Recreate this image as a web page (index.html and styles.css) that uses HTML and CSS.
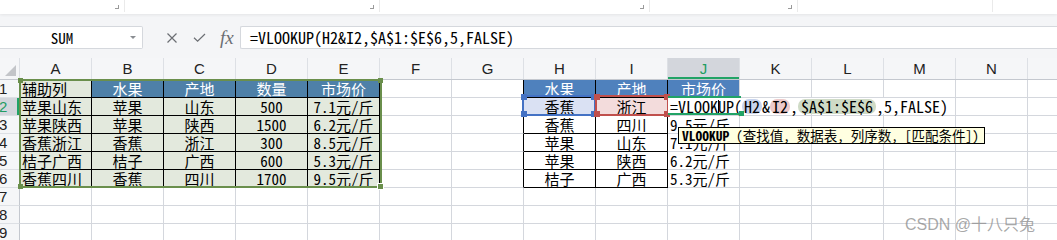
FILE: index.html
```html
<!DOCTYPE html>
<html lang="zh-CN">
<head>
<meta charset="utf-8">
<title>VLOOKUP</title>
<link rel="stylesheet" href="styles.css">
</head>
<body>
<div class="ribbon">
  <div class="grp g1"><span class="launch"></span></div>
  <div class="grp g2"><span class="launch"></span></div>
  <div class="grp g3"><span class="launch"></span></div>
  <div class="grp g4"><span class="launch"></span></div>
  <div class="grp g5"></div>
</div>
<div class="fbar">
  <div class="namebox"><span class="nm">SUM</span><span class="dd"><span class="caret"></span></span></div>
  <div class="fbtns">
    <svg class="ico" width="12" height="12" viewBox="0 0 12 12"><path d="M1.5 1.5L10.5 10.5M10.5 1.5L1.5 10.5" stroke="#6b6e73" stroke-width="1.2" fill="none"/></svg>
    <svg class="ico" width="13" height="10" viewBox="0 0 13 10"><path d="M1 4.8L4.6 8.2L12 1" stroke="#6b6e73" stroke-width="1.2" fill="none"/></svg>
    <span class="fx">fx</span>
  </div>
  <div class="finput">=VLOOKUP(H2&amp;I2,$A$1:$E$6,5,FALSE)</div>
</div>
<div class="sheet">
  <div class="row hdr">
    <div class="corner"><span class="tri"></span></div>
    <div class="ch">A</div><div class="ch">B</div><div class="ch">C</div><div class="ch">D</div><div class="ch">E</div><div class="ch">F</div><div class="ch">G</div><div class="ch">H</div><div class="ch">I</div><div class="ch sel">J</div><div class="ch">K</div><div class="ch">L</div><div class="ch">M</div><div class="ch">N</div><div class="ch"></div>
  </div>
  <div class="row">
    <div class="rh">1</div>
    <div class="c g k l">辅助列</div><div class="c hb k">水果</div><div class="c hb k">产地</div><div class="c hb k">数量</div><div class="c hb k">市场价</div>
    <div class="c"></div><div class="c kl"></div>
    <div class="c hr k">水果</div><div class="c hr k">产地</div><div class="c hr">市场价</div>
    <div class="c"></div><div class="c"></div><div class="c"></div><div class="c"></div><div class="c"></div>
  </div>
  <div class="row">
    <div class="rh sel">2</div>
    <div class="c g k l">苹果山东</div><div class="c g k">苹果</div><div class="c g k">山东</div><div class="c g k">500</div><div class="c g k">7.1元/斤</div>
    <div class="c"></div><div class="c kl"></div>
    <div class="c k bluebg">香蕉</div><div class="c k pinkbg">浙江</div><div class="c"></div>
    <div class="c"></div><div class="c"></div><div class="c"></div><div class="c"></div><div class="c"></div>
  </div>
  <div class="row">
    <div class="rh">3</div>
    <div class="c g k l">苹果陕西</div><div class="c g k">苹果</div><div class="c g k">陕西</div><div class="c g k">1500</div><div class="c g k">6.2元/斤</div>
    <div class="c"></div><div class="c kl"></div>
    <div class="c k">香蕉</div><div class="c k">四川</div><div class="c l">9.5元/斤</div>
    <div class="c"></div><div class="c"></div><div class="c"></div><div class="c"></div><div class="c"></div>
  </div>
  <div class="row">
    <div class="rh">4</div>
    <div class="c g k l">香蕉浙江</div><div class="c g k">香蕉</div><div class="c g k">浙江</div><div class="c g k">300</div><div class="c g k">8.5元/斤</div>
    <div class="c"></div><div class="c kl"></div>
    <div class="c k">苹果</div><div class="c k">山东</div><div class="c l">7.1元/斤</div>
    <div class="c"></div><div class="c"></div><div class="c"></div><div class="c"></div><div class="c"></div>
  </div>
  <div class="row">
    <div class="rh">5</div>
    <div class="c g k l">桔子广西</div><div class="c g k">桔子</div><div class="c g k">广西</div><div class="c g k">600</div><div class="c g k">5.3元/斤</div>
    <div class="c"></div><div class="c kl"></div>
    <div class="c k">苹果</div><div class="c k">陕西</div><div class="c l">6.2元/斤</div>
    <div class="c"></div><div class="c"></div><div class="c"></div><div class="c"></div><div class="c"></div>
  </div>
  <div class="row">
    <div class="rh">6</div>
    <div class="c g k l">香蕉四川</div><div class="c g k">香蕉</div><div class="c g k">四川</div><div class="c g k">1700</div><div class="c g k">9.5元/斤</div>
    <div class="c"></div><div class="c kl"></div>
    <div class="c k">桔子</div><div class="c k">广西</div><div class="c l">5.3元/斤</div>
    <div class="c"></div><div class="c"></div><div class="c"></div><div class="c"></div><div class="c"></div>
  </div>
  <div class="row">
    <div class="rh">7</div>
    <div class="c"></div><div class="c"></div><div class="c"></div><div class="c"></div><div class="c"></div><div class="c"></div><div class="c"></div><div class="c"></div><div class="c"></div><div class="c"></div><div class="c"></div><div class="c"></div><div class="c"></div><div class="c"></div><div class="c"></div>
  </div>
  <div class="row">
    <div class="rh">8</div>
    <div class="c"></div><div class="c"></div><div class="c"></div><div class="c"></div><div class="c"></div><div class="c"></div><div class="c"></div><div class="c"></div><div class="c"></div><div class="c"></div><div class="c"></div><div class="c"></div><div class="c"></div><div class="c"></div><div class="c"></div>
  </div>
  <div class="row">
    <div class="rh">9</div>
    <div class="c"></div><div class="c"></div><div class="c"></div><div class="c"></div><div class="c"></div><div class="c"></div><div class="c"></div><div class="c"></div><div class="c"></div><div class="c"></div><div class="c"></div><div class="c"></div><div class="c"></div><div class="c"></div><div class="c"></div>
  </div>

  <div class="selA"><span class="hd tl"></span><span class="hd tr"></span><span class="hd bl"></span><span class="hd br big"></span></div>
  <div class="selH"><span class="hd tl"></span><span class="hd tr"></span><span class="hd bl"></span><span class="hd br"></span></div>
  <div class="selI"><span class="hd tl"></span><span class="hd tr"></span><span class="hd bl"></span><span class="hd br"></span></div>
  <div class="acttop"></div>
  <div class="editor">=VLOOK<span class="cur"></span>UP(<span class="pill p1">H2</span>&amp;<span class="pill p2">I2</span>,<span class="pill p3">$A$1:$E$6</span>,5,FALSE)</div>
  <div class="actbot"><span class="ah"></span></div>
  <div class="tip"><b>VLOOKUP</b> (查找值, 数据表, 列序数, [匹配条件])</div>
  <div class="wm">CSDN @十八只兔</div>
</div>
</body>
</html>
```
FILE: styles.css
```css
* { box-sizing: border-box; margin: 0; padding: 0; }
html, body { width: 1057px; height: 240px; overflow: hidden; background: #fff; }
body {
  font-family: "Noto Sans Mono CJK SC", "Noto Sans CJK SC", "Liberation Mono", monospace;
  font-size: 15px;
  color: #000;
}

/* ribbon bottom strip */
.ribbon {
  height: 14px;
  display: flex;
  background: #fff;
  position: relative;
  z-index: 2;
  box-shadow: 0 1px 3px rgba(0, 0, 0, 0.07);
}
.grp { position: relative; height: 12px; border-right: 1px solid #eaeaea; }
.g1 { width: 125px; }
.g2 { width: 255px; }
.g3 { width: 270px; }
.g4 { width: 148px; }
.g5 { width: 195px; }
.launch {
  position: absolute; right: 5px; top: 5px;
  width: 4px; height: 4px;
  border-right: 1px solid #9a9a9a; border-bottom: 1px solid #9a9a9a;
}

/* formula bar */
.fbar {
  height: 44px;
  background: #f4f5f7;
  padding-top: 12px;
  display: flex;
  align-items: flex-start;
}
.namebox {
  width: 143px; height: 23px;
  background: #fff;
  border: 1px solid #d5d8dd; border-left: none;
  border-radius: 0 2px 2px 0;
  display: flex; align-items: center;
}
.nm { flex: 1; text-align: center; font-size: 15px; line-height: 21px; }
.dd { width: 18px; display: flex; justify-content: center; }
.caret { width: 0; height: 0; border-left: 3px solid transparent; border-right: 3px solid transparent; border-top: 3px solid #8a8d92; }
.fbtns { width: 97px; height: 23px; display: flex; align-items: center; padding-left: 23px; gap: 15px; }
.fx { font-family: "Liberation Serif", serif; font-style: italic; font-size: 19px; color: #6b6e73; line-height: 21px; margin-left: -1px; }
.finput {
  flex: 1; height: 23px;
  background: #fff;
  border: 1px solid #d5d8dd; border-right: none;
  border-radius: 2px 0 0 2px;
  padding-left: 9px;
  font-size: 16px; line-height: 21px;
  white-space: nowrap;
}

/* sheet */
.sheet { position: relative; }
.row { display: grid; grid-template-columns: 20px repeat(15, 72px); height: 18px; }
.hdr { height: 22px; background: #f5f6f8; border-bottom: 1px solid #c4c8cf; }
.corner { position: relative; border-right: 1px solid #dde0e5; }
.tri { position: absolute; right: 3px; bottom: 3px; width: 0; height: 0; border-left: 11px solid transparent; border-bottom: 11px solid #c3c5c9; }
.ch {
  font-family: "Liberation Sans", Arial, sans-serif; font-size: 15px;
  line-height: 21px; text-align: center; color: #222;
  border-right: 1px solid #dde0e5;
}
.ch.sel { background: #d3d6dc; color: #1f9d63; box-shadow: inset 0 -2px 0 #21a366; }

.rh {
  font-family: "Liberation Sans", Arial, sans-serif; font-size: 15px;
  line-height: 17px; color: #222;
  background: #f5f6f8;
  border-right: 1px solid #c4c8cf; border-bottom: 1px solid #dde0e5;
  text-indent: -1px;
}
.rh.sel { background: #d3d6dc; color: #1f9d63; box-shadow: inset -2px 0 0 #21a366; }

.c {
  border-right: 1px solid #d4d7dd; border-bottom: 1px solid #d4d7dd;
  line-height: 17px; white-space: nowrap;
  text-align: center;
}
.c.l { text-align: left; padding-left: 2px; }
.c.g { background: #e3e9dd; }
.c.hb { background: #4e80a8; color: #fff; }
.c.hr { background: #4f81bd; color: #fff; }
.c.k { border-right-color: #000; border-bottom-color: #000; }
.c.kl { border-right-color: #000; }
.c.bluebg { background: #dae1f3; }
.c.pinkbg { background: #f3dcdc; }

/* selection overlays */
.selA { position: absolute; left: 19px; top: 21px; width: 363px; height: 109px; border: 2px solid #6a8f4c; }
.selH { position: absolute; left: 522px; top: 37px; width: 74px; height: 21px; border: 2px solid #4472c4; }
.selI { position: absolute; left: 595px; top: 37px; width: 74px; height: 21px; border: 2px solid #c0504d; }
.hd { position: absolute; width: 5px; height: 5px; }
.selA .hd { background: #6a8f4c; }
.selH .hd { background: #4472c4; width: 6px; height: 6px; }
.selI .hd { background: #c0504d; width: 6px; height: 6px; }
.hd.tl { left: -3px; top: -3px; }
.hd.tr { right: -3px; top: -3px; }
.hd.bl { left: -3px; bottom: -3px; }
.hd.br { right: -3px; bottom: -3px; }
.hd.big { width: 7px; height: 7px; right: -4px; bottom: -4px; border: 1px solid #fff; }

.acttop { position: absolute; left: 668px; top: 38px; width: 73px; height: 2px; background: #21a366; }
.editor {
  position: absolute; left: 668px; top: 40px; width: 284px; height: 16px;
  background: #fff; padding-left: 2px;
  font-size: 16px; line-height: 16px; white-space: nowrap;
}
.cur { display: inline-block; width: 1px; height: 15px; background: #000; vertical-align: -2px; margin: 0 -1px 0 0; }
.pill { display: inline-block; border-radius: 7px; padding: 0 2px; line-height: 15px; }
.p1 { background: #c8d4ee; }
.p2 { background: #edcaca; }
.p3 { background: #cfdbc6; padding: 0 3px; }
.actbot { position: absolute; left: 668px; top: 55px; width: 74px; height: 2px; background: #21a366; }
.ah { position: absolute; right: -2px; top: -2px; width: 5px; height: 5px; background: #21a366; }

.tip {
  position: absolute; left: 678px; top: 69px; width: 307px; height: 17px;
  background: #ffffe1; border: 1px solid #000;
  padding-left: 3px;
  font-size: 13.5px; line-height: 15px; white-space: nowrap;
}
.tip b { font-weight: 700; }

.wm {
  position: absolute; left: 905px; top: 157px;
  font-family: "Liberation Sans", "Noto Sans CJK SC", sans-serif;
  font-size: 16px; line-height: 20px;
  color: rgba(140, 140, 140, 0.75);
  white-space: nowrap;
}
```
